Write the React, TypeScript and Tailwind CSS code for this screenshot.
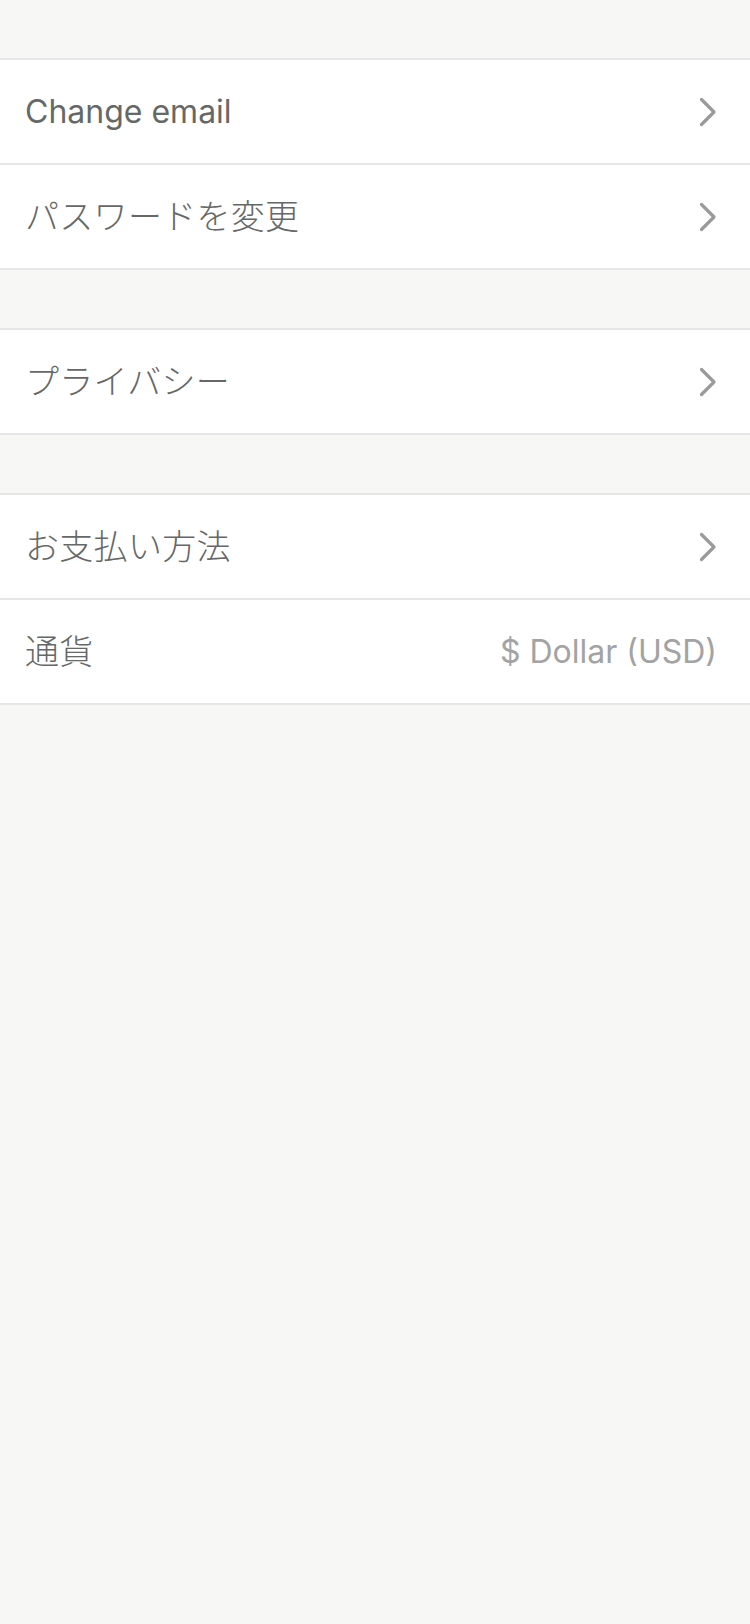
import { ReactNode } from 'react';

const FONT = '"Inter", "Noto Sans CJK JP", sans-serif';

function Chevron() {
  return (
    <svg width="18" height="30" viewBox="0 0 18 30" fill="none" className="shrink-0">
      <path d="M2.5 2.5 L15 15 L2.5 27.5" stroke="#9a9a9a" strokeWidth="3.2" strokeLinecap="round" strokeLinejoin="round" />
    </svg>
  );
}

interface RowProps {
  label: string;
  value?: string;
  arrow?: boolean;
  jp?: boolean;
}

function Row({ label, value, arrow = true, jp = false }: RowProps) {
  return (
    <div className="flex h-[105px] items-center justify-between border-b-2 border-[#e6e6e6] bg-white pl-[25px] pr-[33px]">
      <span
        className={
          jp
            ? 'text-[34px] font-light tracking-[0.3px] text-[#666867]'
            : 'text-[32px] text-[#666867]'
        }
      >
        {label}
      </span>
      {value && <span className="text-[32px] text-[#a3a3a3]">{value}</span>}
      {arrow && <Chevron />}
    </div>
  );
}

function Section({ children }: { children: ReactNode }) {
  return <div className="border-t-2 border-[#e6e6e6]">{children}</div>;
}

export default function App() {
  return (
    <div className="flex min-h-[1624px] w-[750px] flex-col gap-[58px] bg-[#f7f7f5] pt-[58px]" style={{ fontFamily: FONT }}>
      <Section>
        <Row label="Change email" />
        <Row label="パスワードを変更" jp />
      </Section>
      <Section>
        <Row label="プライバシー" jp />
      </Section>
      <Section>
        <Row label="お支払い方法" jp />
        <Row label="通貨" value="$ Dollar (USD)" arrow={false} jp />
      </Section>
    </div>
  );
}
